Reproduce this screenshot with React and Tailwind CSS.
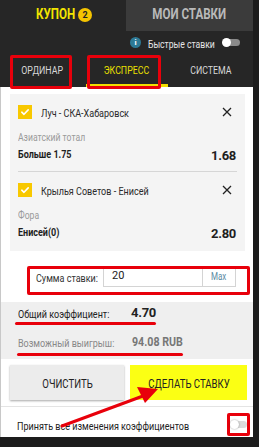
import React from 'react';

// condensed look: Roboto squeezed horizontally
const N = ({ className = '', children }) => (
  <span className={`inline-block whitespace-nowrap origin-left scale-x-[0.82] ${className}`}>{children}</span>
);
const C = ({ className = '', children }) => (
  <span className={`inline-block whitespace-nowrap origin-center scale-x-[0.8] ${className}`}>{children}</span>
);

const Check = () => (
  <svg viewBox="0 0 14 14" className="w-[14px] h-[14px] shrink-0">
    <rect width="14" height="14" fill="#f8c800" />
    <path d="M3.8 7.2l2.2 2.1 4.2-4.4" fill="none" stroke="#fff" strokeWidth="1.6" strokeLinecap="round" strokeLinejoin="round" />
  </svg>
);

const Close = () => (
  <svg viewBox="0 0 10 10" className="w-[10px] h-[10px]">
    <path d="M1 1l8 8M9 1l-8 8" stroke="#222" strokeWidth="1.3" />
  </svg>
);

const Bet = ({ teams, market, pick, odd, divider }) => (
  <div className={divider ? 'border-b border-[#d6d6d6]' : ''}>
    <div className="flex items-center h-[34px] pt-[1px]">
      <Check />
      <span className="ml-[9px] flex-1"><N className="text-[11px] text-[#2a2a2a]">{teams}</N></span>
      <span className="mr-[5px]"><Close /></span>
    </div>
    <div className="mt-[1px] leading-[14px]"><N className="text-[10.5px] text-[#9a9a9a]">{market}</N></div>
    <div className="flex items-center justify-between h-[22px] pb-[1px]">
      <N className="text-[11px] font-bold text-[#1e1e1e]">{pick}</N>
      <span className="text-[13px] font-bold text-[#1e1e1e] mr-[1px] tracking-[-0.3px]">{odd}</span>
    </div>
    {divider && <div className="h-[4px]" />}
  </div>
);

export default function App() {
  return (
    <div className="w-[259px] h-[447px] bg-[#1c1c1c] flex overflow-hidden font-['Roboto',sans-serif] relative">
      <div className="w-[253px] flex flex-col">
        {/* top tabs */}
        <div className="flex h-[35px]">
          <div className="w-[126px] bg-[#262626] flex items-center pl-[31px]">
            <C className="text-[14.5px] font-bold text-[#f2e400]">КУПОН</C>
            <span className="ml-[-2px] w-[14px] h-[14px] rounded-full bg-[#f5c400] text-[9px] font-bold text-[#222] flex items-center justify-center">2</span>
          </div>
          <div className="flex-1 bg-[#3b3b3b] flex items-center justify-center">
            <C className="text-[14.5px] font-bold text-[#b9b9b9]">МОИ СТАВКИ</C>
          </div>
        </div>
        {/* quick bets */}
        <div className="h-[25px] bg-[#262626] flex items-center pl-[130px]">
          <span className="w-[11px] h-[11px] rounded-full bg-[#2d7a96] text-white text-[8px] font-bold flex items-center justify-center">i</span>
          <span className="ml-[7px] w-[74px]"><N className="text-[10.5px] text-[#e6e6e6]">Быстрые ставки</N></span>
          <span className="relative w-[18px] h-[9px]">
            <span className="absolute left-[3px] right-0 top-[1px] h-[7px] rounded-full bg-[#8a8a8a]" />
            <span className="absolute left-0 top-0 w-[9px] h-[9px] rounded-full bg-white" />
          </span>
        </div>
        {/* sub tabs */}
        <div className="h-[37px] bg-[#262626] flex relative">
          <div className="w-[84px] flex items-center justify-center pt-[1px]"><C className="text-[11px] text-[#d8d8d8]">ОРДИНАР</C></div>
          <div className="w-[84px] flex items-center justify-center pt-[1px] relative">
            <C className="text-[11px] text-[#ebe000]">ЭКСПРЕСС</C>
            <span className="absolute left-[2px] right-0 bottom-0 h-[3px] bg-[#f3de00]" />
          </div>
          <div className="flex-1 flex items-center justify-center pt-[1px]"><C className="text-[11px] text-[#d8d8d8]">СИСТЕМА</C></div>
          <div className="absolute left-[10px] top-0 w-[62px] h-[34px] border-[3px] border-[#e8000b] rounded-[2px]" />
          <div className="absolute left-[87px] top-0 w-[74px] h-[34px] border-[3px] border-[#e8000b] rounded-[2px]" />
        </div>
        {/* body */}
        <div className="flex-1 bg-white border-l border-[#c8c8c8] flex flex-col">
          <div className="ml-[9px] mr-[8px] mt-[7px] bg-[#f4f4f4] px-[8px]">
            <Bet teams="Луч - СКА-Хабаровск" market="Азиатский тотал" pick="Больше 1.75" odd="1.68" divider />
            <Bet teams="Крылья Советов - Енисей" market="Фора" pick="Енисей(0)" odd="2.80" />
            <div className="h-[6px]" />
          </div>
          {/* stake */}
          <div className="relative h-[51px] flex items-center pl-[35px]">
            <span className="w-[67px]"><N className="text-[11px] text-[#333]">Сумма ставки:</N></span>
            <div className="w-[133px] h-[21px] border border-[#d4d4d4] bg-white flex items-center">
              <span className="flex-1 pl-[8px] text-[11px] text-[#222]">20</span>
              <span className="w-[33px] h-full border-l border-[#d4d4d4] flex items-center justify-center"><C className="text-[10px] text-[#5b8aa3]">Max</C></span>
            </div>
            <div className="absolute left-[26px] top-[15px] w-[223px] h-[29px] border-[3px] border-[#e8000b] rounded-[2px]" />
          </div>
          {/* totals */}
          <div className="h-[57px] bg-[#efefef] flex flex-col pl-[17px]">
            <div className="relative h-[22px] flex items-center">
              <span className="w-[113px]"><N className="text-[11px] text-[#222]">Общий коэффициент:</N></span>
              <span className="text-[13px] font-bold text-[#222] tracking-[-0.3px]">4.70</span>
              <span className="absolute left-[-3px] w-[141px] bottom-[-1px] h-[3px] rounded-full bg-[#e8000b]" />
            </div>
            <div className="relative h-[26px] flex items-center mt-[5px]">
              <span className="w-[114px]"><N className="text-[11px] text-[#888]">Возможный выигрыш:</N></span>
              <N className="text-[13px] font-bold text-[#777]">94.08 RUB</N>
              <span className="absolute left-[-1px] w-[166px] bottom-[-1px] h-[3px] rounded-full bg-[#e8000b]" />
            </div>
          </div>
          {/* buttons */}
          <div className="flex gap-[6px] pl-[9px] pr-[6px] mt-[6px]">
            <button className="w-[114px] h-[35px] bg-[#ececec] shadow-[0_1px_2px_rgba(0,0,0,0.35)]"><C className="text-[12px] text-[#222]">ОЧИСТИТЬ</C></button>
            <button className="flex-1 h-[35px] bg-[#fbff14]"><C className="text-[12px] text-[#222]">СДЕЛАТЬ СТАВКУ</C></button>
          </div>
          {/* accept changes */}
          <div className="flex-1 flex items-center justify-between pl-[16px] pr-[7px] border-t border-[#e4e4e4] mt-[6px]">
            <span className="pt-[6px]"><N className="text-[11px] text-[#222]">Принять все изменения коэффициентов</N></span>
            <div className="w-[26px] h-[23px] border-[3px] border-[#e8000b] rounded-[2px] flex items-center justify-center mt-[4px]">
              <span className="relative w-[17px] h-[9px]">
                <span className="absolute left-[3px] right-0 top-[1px] h-[7px] rounded-full bg-[#dcdcdc]" />
                <span className="absolute left-0 top-0 w-[9px] h-[9px] rounded-full bg-white shadow-[0_0_2px_rgba(0,0,0,0.4)]" />
              </span>
            </div>
          </div>
          <div className="h-[10px] bg-[#1c1c1c] -ml-[1px]" />
        </div>
      </div>
      <svg className="absolute left-0 top-0 pointer-events-none" width="259" height="447" viewBox="0 0 259 447">
        <path d="M62 426 L143 396" stroke="#e8000b" strokeWidth="3" strokeLinecap="round" />
        <path d="M158 389 L137 387 L145 403 Z" fill="#e8000b" />
      </svg>
    </div>
  );
}
